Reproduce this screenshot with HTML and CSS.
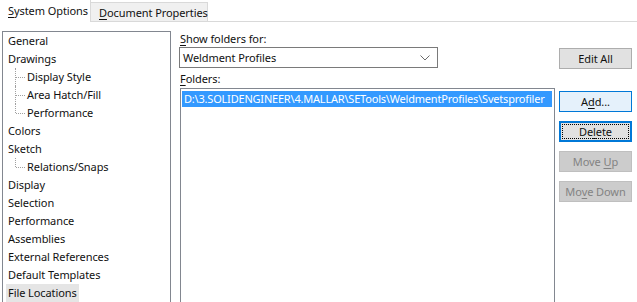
FILE: index.html
```html
<!DOCTYPE html>
<html>
<head>
<meta charset="utf-8">
<link rel="stylesheet" href="styles.css">
</head>
<body>
<div class="tabbar">
  <div class="tab active"><u>S</u>ystem Options</div>
  <div class="tab"><u>D</u>ocument Properties</div>
  <div class="tabfill"></div>
</div>
<div class="content">
  <div class="tree">
    <div class="item"><span>General</span></div>
    <div class="item"><span>Drawings</span></div>
    <div class="item child"><span>Display Style</span></div>
    <div class="item child"><span>Area Hatch/Fill</span></div>
    <div class="item child last"><span>Performance</span></div>
    <div class="item"><span>Colors</span></div>
    <div class="item"><span>Sketch</span></div>
    <div class="item child last"><span>Relations/Snaps</span></div>
    <div class="item"><span>Display</span></div>
    <div class="item"><span>Selection</span></div>
    <div class="item"><span>Performance</span></div>
    <div class="item"><span>Assemblies</span></div>
    <div class="item"><span>External References</span></div>
    <div class="item"><span>Default Templates</span></div>
    <div class="item selected"><span>File Locations</span></div>
  </div>
  <div class="panel">
    <div class="fields">
      <div class="label"><u>S</u>how folders for:</div>
      <div class="combo">
        <span>Weldment Profiles</span>
        <svg class="chev" width="10" height="6" viewBox="0 0 10 6"><path d="M0.5 0.5 L5 5 L9.5 0.5" fill="none" stroke="#6b6b6b" stroke-width="1"/></svg>
      </div>
      <div class="label folders"><u>F</u>olders:</div>
      <div class="listbox">
        <div class="row sel">D:\3.SOLIDENGINEER\4.MALLAR\SETools\WeldmentProfiles\Svetsprofiler</div>
      </div>
    </div>
    <div class="buttons">
      <div class="btn editall">Edit All</div>
      <div class="btn hover">A<u>d</u>d...</div>
      <div class="btn focus"><span class="focusrect">De<u>l</u>ete</span></div>
      <div class="btn disabled">Move <u>U</u>p</div>
      <div class="btn disabled">Mo<u>v</u>e Down</div>
    </div>
  </div>
</div>
</body>
</html>
```
FILE: styles.css
```css
* { box-sizing: border-box; }
html, body { margin: 0; padding: 0; }
body {
  width: 637px;
  height: 302px;
  overflow: hidden;
  background: #ffffff;
  font-family: "Noto Sans", "Open Sans", sans-serif;
  font-size: 11px;
  letter-spacing: -0.08px;
  color: #111;
}
u { text-decoration: underline; text-underline-offset: 2px; }

.tabbar {
  display: flex;
  height: 22px;
  align-items: flex-end;
}
.tab {
  height: 20px;
  line-height: 19px;
  padding: 0 8px;
  background: #f0f0f0;
  border: 1px solid #d9d9d9;
  white-space: nowrap;
}
.tab.active {
  height: 22px;
  line-height: 22px;
  background: #fff;
  border: none;
  border-right: 1px solid #d9d9d9;
  width: 91px;
  padding-left: 8px;
}
.tab:not(.active) {
  border-left: none;
  width: 117px;
}
.tabfill {
  flex: 1;
  height: 1px;
  background: #d9d9d9;
}

.content {
  display: flex;
  padding: 9px 0 0 2px;
}
.tree {
  width: 169px;
  height: 271px;
  border: 1px solid #828790;
  border-bottom: none;
  flex: none;
}
.item {
  position: relative;
  height: 18px;
  line-height: 18px;
  padding-left: 3px;
  white-space: nowrap;
}
.item span { padding: 0 2px; display: inline-block; height: 18px; }
.item.child { padding-left: 22px; }
.item.child::before {
  content: "";
  position: absolute;
  left: 12px;
  top: 0;
  bottom: 0;
  border-left: 1px dotted #a0a0a0;
}
.item.child.last::before { bottom: 9px; }
.item.child::after {
  content: "";
  position: absolute;
  left: 13px;
  top: 9px;
  width: 9px;
  border-top: 1px dotted #a0a0a0;
}
.item.selected span { background: #e5e5e5; }

.panel {
  display: flex;
  margin-left: 8px;
  gap: 4px;
}
.fields {
  width: 376px;
  display: flex;
  flex-direction: column;
}
.label {
  height: 16px;
  line-height: 16px;
  padding-left: 1px;
}
.label.folders {
  height: 20px;
  padding-top: 3px;
}
.combo {
  width: 259px;
  height: 21px;
  border: 1px solid #7a7a7a;
  display: flex;
  align-items: center;
  justify-content: space-between;
  padding: 0 7px 0 3px;
  line-height: 19px;
}
.chev { display: block; }
.listbox {
  margin-left: 1px;
  width: 375px;
  height: 214px;
  border: 1px solid #828790;
  border-bottom: none;
  padding: 2px 0 0 1px;
}
.row {
  height: 16px;
  line-height: 15px;
  white-space: nowrap;
  padding-left: 2px;
}
.row.sel {
  background: #3399ff;
  color: #fff;
  width: 370px;
  letter-spacing: -0.2px;
  overflow: hidden;
}

.buttons {
  display: flex;
  flex-direction: column;
  gap: 9px;
  padding-top: 17px;
}
.btn {
  width: 73px;
  height: 21px;
  line-height: 19px;
  text-align: center;
  background: #e1e1e1;
  border: 1px solid #adadad;
  white-space: nowrap;
}
.btn.editall { margin-bottom: 13px; }
.btn.hover {
  background: #e5f1fb;
  border-color: #0078d7;
}
.btn.focus {
  border: 2px solid #0078d7;
  line-height: 17px;
  padding: 1px;
}
.focusrect {
  display: block;
  height: 15px;
  line-height: 15px;
  outline: 1px dotted #000;
  outline-offset: -1px;
}
.btn.disabled {
  background: #cccccc;
  border-color: #bfbfbf;
  color: #838383;
}
```
